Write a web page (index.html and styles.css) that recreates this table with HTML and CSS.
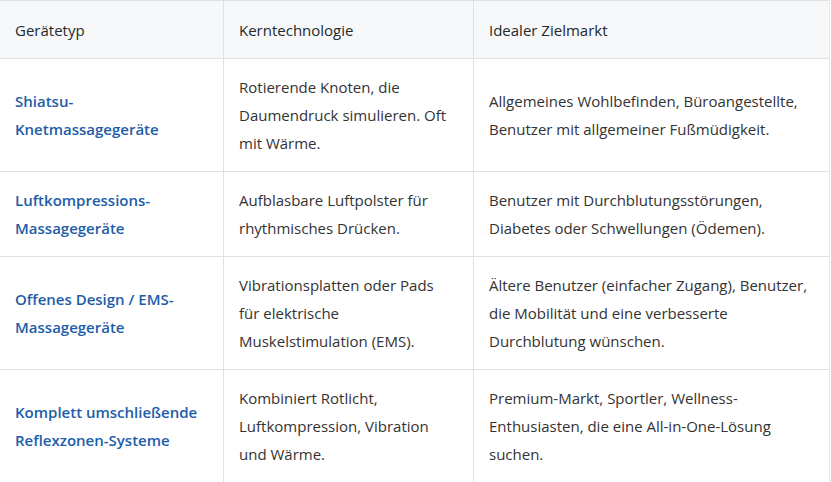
FILE: index.html
```html
<!DOCTYPE html>
<html lang="de">
<head>
<meta charset="utf-8">
<link rel="stylesheet" href="styles.css">
</head>
<body>
<div class="wrap">
<table class="cmp">
<colgroup><col class="c1"><col class="c2"><col class="c3"></colgroup>
<thead>
<tr><th>Gerätetyp</th><th>Kerntechnologie</th><th>Idealer Zielmarkt</th></tr>
</thead>
<tbody>
<tr><td class="name">Shiatsu-Knetmassagegeräte</td><td>Rotierende Knoten, die Daumendruck simulieren. Oft mit Wärme.</td><td>Allgemeines Wohlbefinden, Büroangestellte, Benutzer mit allgemeiner Fußmüdigkeit.</td></tr>
<tr><td class="name">Luftkompressions-Massagegeräte</td><td>Aufblasbare Luftpolster für rhythmisches Drücken.</td><td>Benutzer mit Durchblutungsstörungen, Diabetes oder Schwellungen (Ödemen).</td></tr>
<tr><td class="name">Offenes Design / EMS-Massagegeräte</td><td>Vibrationsplatten oder Pads für elektrische Muskelstimulation (EMS).</td><td>Ältere Benutzer (einfacher Zugang), Benutzer, die Mobilität und eine verbesserte Durchblutung wünschen.</td></tr>
<tr><td class="name">Komplett umschließende Reflexzonen-Systeme</td><td>Kombiniert Rotlicht, Luftkompression, Vibration und Wärme.</td><td>Premium-Markt, Sportler, Wellness-Enthusiasten, die eine All-in-One-Lösung suchen.</td></tr>
</tbody>
</table>
</div>
</body>
</html>
```
FILE: styles.css
```css
html, body { margin: 0; padding: 0; background: #fff; }
.wrap {
  width: 830px;
  border-right: 1px solid #e6e8eb;
  box-sizing: border-box;
  overflow: hidden;
}
.cmp {
  border-collapse: collapse;
  table-layout: fixed;
  width: 830px;
  margin-left: -1px;
  font-family: "Open Sans", "Noto Sans", sans-serif;
  font-size: 15px;
  line-height: 28px;
  color: #333;
}
.c1 { width: 224px; }
.c2 { width: 250px; }
.c3 { width: 356px; }
.cmp th, .cmp td {
  border: 1px solid #dfe2e5;
  padding: 14px 16px 14px 15px;
  text-align: left;
  vertical-align: middle;
}
.cmp th {
  padding-top: 14.5px;
  padding-bottom: 14.5px;
  background: #f6f8fa;
  font-weight: 500;
  color: #24292e;
}
.cmp td.name {
  color: #1d5da8;
  font-weight: 600;
}
```
